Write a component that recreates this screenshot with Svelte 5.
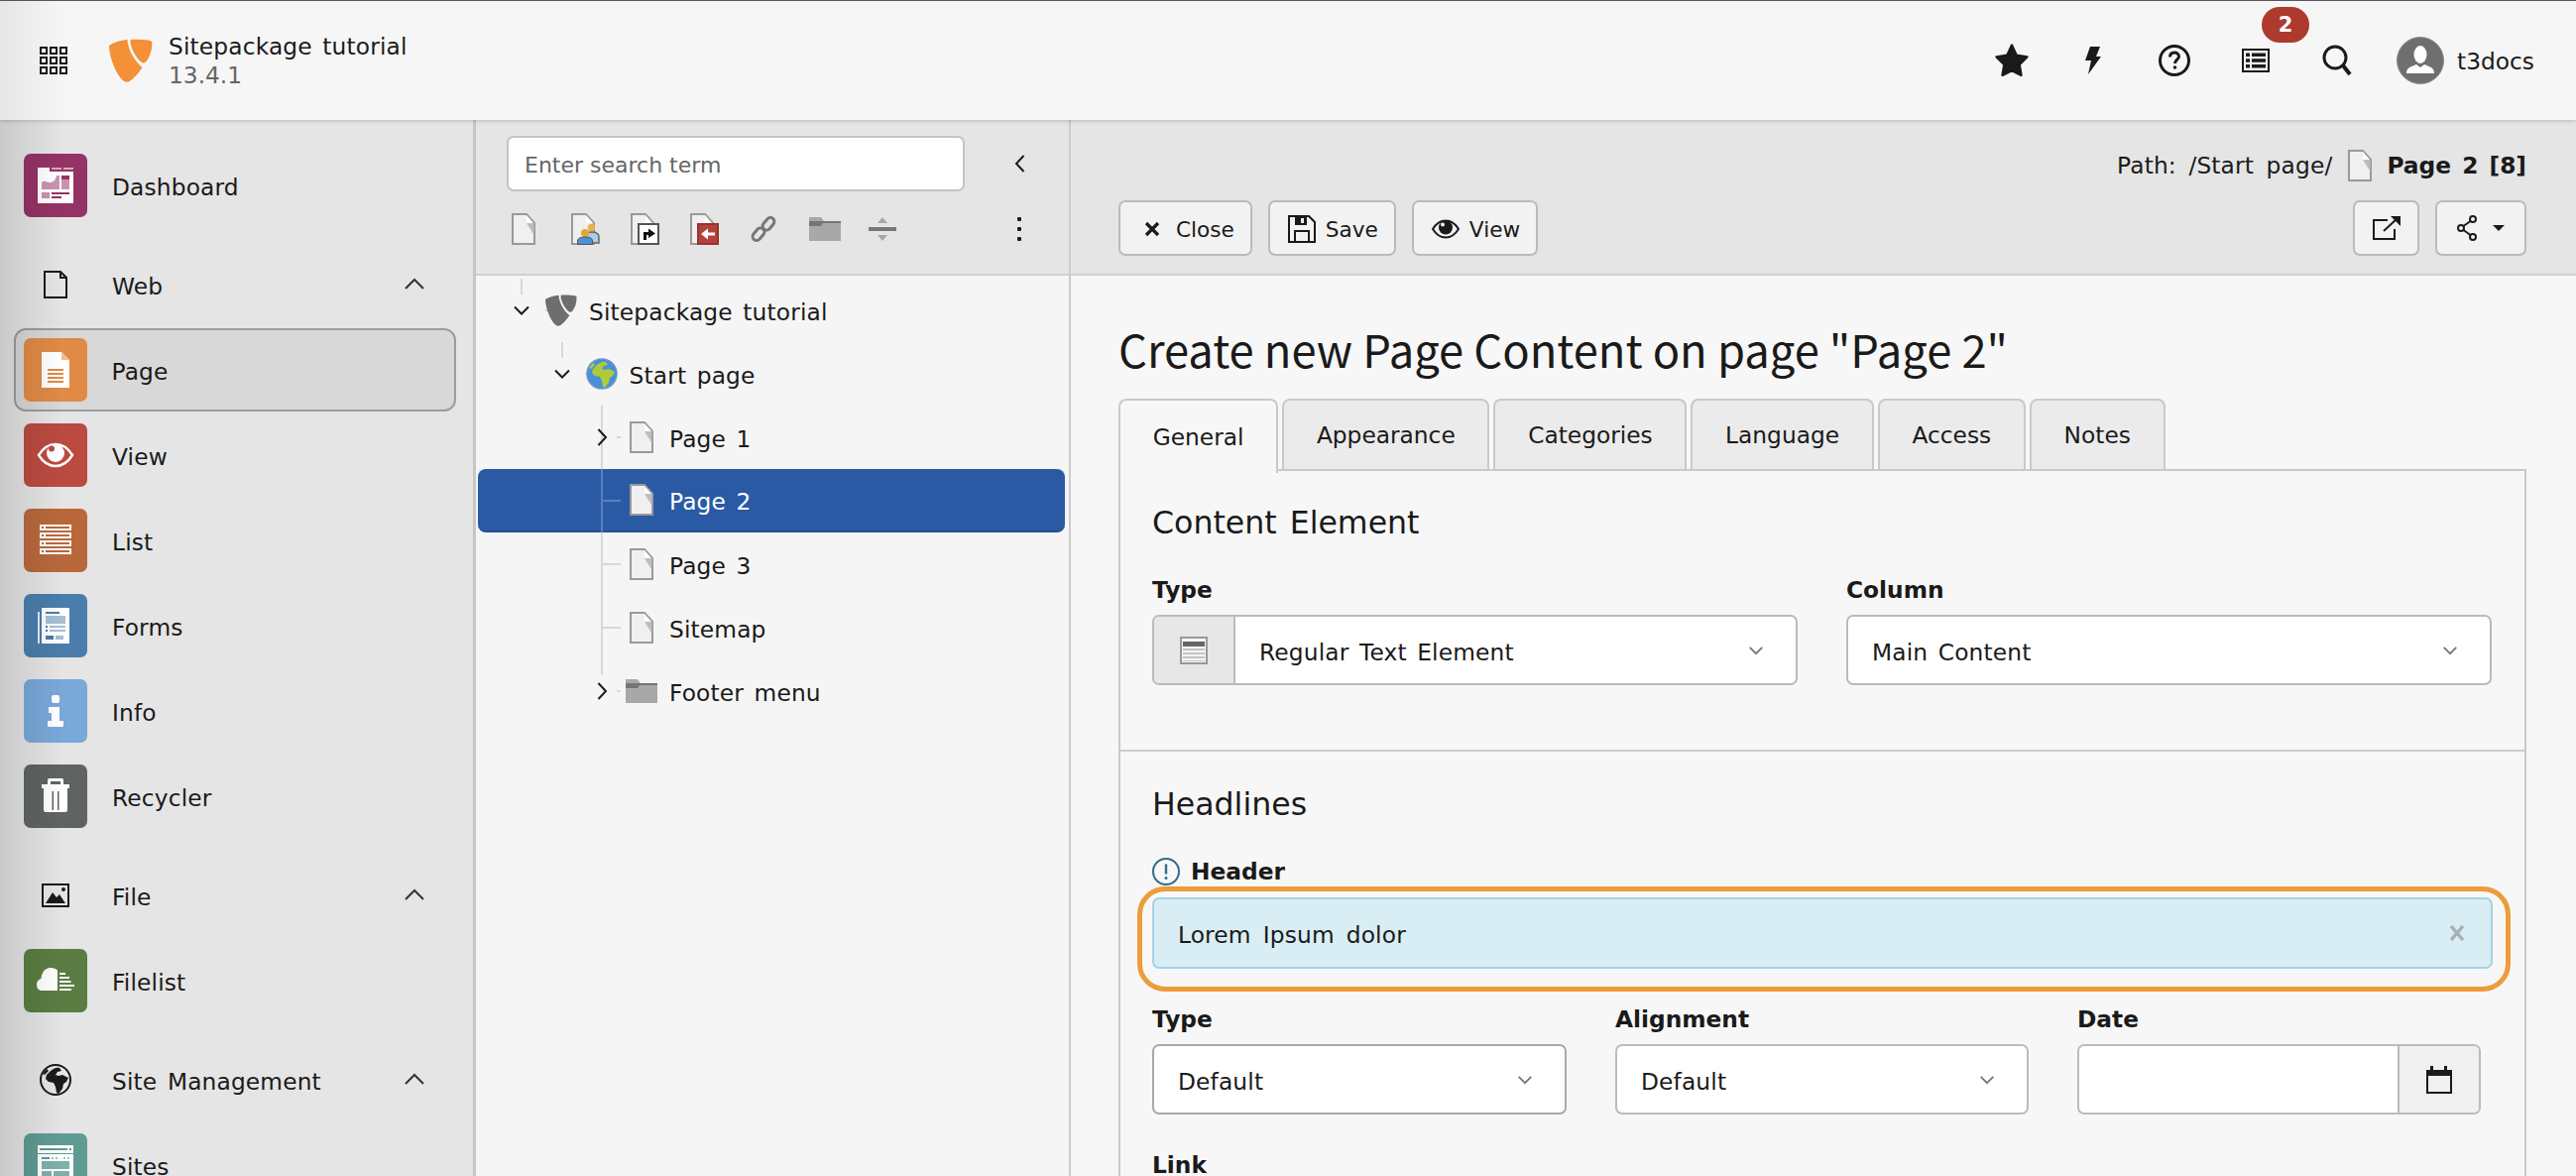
<script>
  const treeRows = [
    { label: 'Sitepackage tutorial', depth: 0, chev: 'down', icon: 'logo' },
    { label: 'Start page', depth: 1, chev: 'down', icon: 'globe' },
    { label: 'Page 1', depth: 2, chev: 'right', icon: 'doc' },
    { label: 'Page 2', depth: 2, icon: 'doc', selected: true },
    { label: 'Page 3', depth: 2, icon: 'doc' },
    { label: 'Sitemap', depth: 2, icon: 'doc' },
    { label: 'Footer menu', depth: 2, chev: 'right', icon: 'folder' }
  ];
  const tabs = ['General', 'Appearance', 'Categories', 'Language', 'Access', 'Notes'];
</script>

{#snippet logo(w, h, fill)}
  <svg width={w} height={h} viewBox="0 0 44 44">
    <path {fill} d="M0 7C4 4 12 1.5 18.5 1C19 12 27 24 33.5 29C28 37 22 43.7 18 43.7C10 43.7 0 20 0 7Z" />
    <path {fill} d="M21.5 1C27 .5 42 1 43 3C43.5 5 43.5 8 42 14C40 20 37.5 24 35 24.5C30 24.5 21.5 10 21.5 3Z" />
  </svg>
{/snippet}

{#snippet doc()}
  <svg width="24" height="32" viewBox="0 0 24 32">
    <path d="M1 1H15L23 10V31H1Z" fill="#f0f0f0" stroke="#999" stroke-width="2" />
    <path d="M15 2V10H22Z" fill="#fff" />
    <path d="M15 10H22.5V22Z" fill="#bdbdbd" />
  </svg>
{/snippet}

{#snippet folder(w, h)}
  <svg width={w} height={h} viewBox="0 0 32 24">
    <path d="M0 0H12L15 4H32V24H0Z" fill="#a8a8a8" />
    <path d="M0 4H32V6H14L12 9H0Z" fill="#757575" />
  </svg>
{/snippet}

{#snippet chev(dir, color = '#1a1a1a', size = 20)}
  <svg class="chev" width={size} height={size} viewBox="0 0 20 20" fill="none" stroke={color} stroke-width="2">
    {#if dir === 'down'}<path d="M3 6.5L10 13.5L17 6.5" />{/if}
    {#if dir === 'up'}<path d="M1 14L10 5L19 14" />{/if}
    {#if dir === 'right'}<path d="M6.5 2L14 10L6.5 18" />{/if}
    {#if dir === 'left'}<path d="M13.5 2L6 10L13.5 18" />{/if}
  </svg>
{/snippet}

{#snippet icoDash()}
  <svg width="64" height="64" viewBox="0 0 64 64">
    <path d="M14 14H26V18H50V50H14Z" fill="#fff" />
    <path d="M28 14H38V16H28ZM40 14H50V16H40Z" fill="#d8a8c0" />
    <rect x="18" y="22" width="18" height="14" fill="#fff" />
    <path d="M18 29C22 26 24 30 27 29C30 28 32 27 33 22H36V36H18Z" fill="#c993b0" />
    <rect x="38" y="22" width="8" height="4" fill="#953364" />
    <rect x="38" y="26" width="8" height="10" fill="#c993b0" />
    <rect x="18" y="39" width="8" height="6" fill="#c993b0" />
    <rect x="28" y="39" width="18" height="2" fill="#953364" />
    <rect x="28" y="43" width="10" height="2" fill="#953364" />
  </svg>
{/snippet}

{#snippet icoPage()}
  <svg width="64" height="64" viewBox="0 0 64 64">
    <path d="M18 14H38L46 22V50H18Z" fill="#fff" />
    <path d="M38 14L46 22H38Z" fill="#eebb92" />
    <path d="M24 31H40V33H24ZM24 35H40V37H24ZM24 39H40V41H24ZM24 43H40V45H24Z" fill="#e08a46" />
  </svg>
{/snippet}

{#snippet icoEye()}
  <svg width="64" height="64" viewBox="0 0 64 64">
    <path d="M15 32C20 24 26 21 32 21C38 21 44 24 49 32C44 40 38 43 32 43C26 43 20 40 15 32Z" fill="none" stroke="#fff" stroke-width="2.4" />
    <circle cx="32" cy="30" r="9" fill="#fff" />
    <circle cx="28" cy="25.5" r="3" fill="#bb4a40" />
  </svg>
{/snippet}

{#snippet icoList()}
  <svg width="64" height="64" viewBox="0 0 64 64">
    {#each [16, 24, 32, 40] as y}
      <rect x="16" {y} width="32" height="6" fill="#fff" />
      <rect x="22" y={y + 2} width="24" height="2" fill="#b9683c" />
      <rect x="18" y={y + 2} width="2" height="2" fill="#b9683c" />
    {/each}
  </svg>
{/snippet}

{#snippet icoForms()}
  <svg width="64" height="64" viewBox="0 0 64 64">
    <rect x="14" y="18" width="2" height="32" fill="#dfe8f1" />
    <rect x="18" y="14" width="28" height="36" fill="#fff" />
    <rect x="22" y="18" width="14" height="2" fill="#4a7dab" />
    <rect x="22" y="22" width="20" height="8" fill="#a3bfd6" />
    <rect x="22" y="32" width="2" height="2" fill="#4a7dab" />
    <rect x="26" y="32" width="16" height="2" fill="#a3bfd6" />
    <rect x="22" y="36" width="2" height="2" fill="#4a7dab" />
    <rect x="26" y="36" width="16" height="2" fill="#a3bfd6" />
    <rect x="22" y="42" width="8" height="4" fill="#4a7dab" />
    <rect x="32" y="42" width="8" height="4" fill="#a3bfd6" />
  </svg>
{/snippet}

{#snippet icoInfo()}
  <svg width="64" height="64" viewBox="0 0 64 64">
    <rect x="28" y="16" width="8" height="8" rx="2" fill="#fff" />
    <path d="M25 28H36V42H40V47a1 1 0 0 1-1 1H25a1 1 0 0 1-1-1V42H28V34H25Z" fill="#fff" />
  </svg>
{/snippet}

{#snippet icoTrash()}
  <svg width="64" height="64" viewBox="0 0 64 64">
    <path d="M24 20V15.5a1.5 1.5 0 0 1 1.500-1.500H38.500a1.500 1.500 0 0 1 1.500 1.500V20H46V24H18V20ZM27 20H37V17H27Z" fill="#fff" />
    <path d="M20 24H44V46a2 2 0 0 1-2 2H22a2 2 0 0 1-2-2Z" fill="#fff" />
    <path d="M28.500 27H30V46H28.500ZM34 27H35.500V46H34Z" fill="#5f6362" />
  </svg>
{/snippet}

{#snippet icoCloud()}
  <svg width="64" height="64" viewBox="0 0 64 64">
    <path d="M34 42H18C15 42 13 39.500 13 36C13 33 15 30.500 17.500 30C18 24 21 19 27 19C30 19 32.500 20 34 21.500Z" fill="#fff" />
    <path d="M36 24H42V26H36ZM36 28H46V30H36ZM36 32H47.500V34H36ZM36 36H51V38H36ZM36 40H48V42H36Z" fill="#fff" />
  </svg>
{/snippet}

{#snippet icoSites()}
  <svg width="64" height="64" viewBox="0 0 64 64">
    <rect x="14" y="12" width="36" height="48" fill="#fff" />
    <rect x="16" y="15" width="28" height="2" fill="#5f9b93" />
    <rect x="46" y="15" width="2" height="2" fill="#5f9b93" />
    <rect x="14" y="20" width="36" height="1" fill="#5f9b93" />
    <rect x="18" y="24" width="8" height="2" fill="#5f9b93" />
    <rect x="28" y="24" width="2" height="2" fill="#9fc4bf" />
    <rect x="32" y="24" width="2" height="2" fill="#9fc4bf" />
    <rect x="40" y="24" width="2" height="2" fill="#9fc4bf" />
    <rect x="44" y="24" width="2" height="2" fill="#9fc4bf" />
    <rect x="18" y="28" width="28" height="8" fill="#7fb0aa" />
    <rect x="18" y="38" width="10" height="8" fill="#7fb0aa" />
    <rect x="30" y="38" width="16" height="8" fill="#7fb0aa" />
  </svg>
{/snippet}

{#snippet icoWeb()}
  <svg width="24" height="28" viewBox="0 0 24 28">
    <path d="M1 1H17L23 7V27H1Z" fill="none" stroke="#1a1a1a" stroke-width="2" />
    <path d="M17 1V7H23" fill="none" stroke="#1a1a1a" stroke-width="2" />
  </svg>
{/snippet}

{#snippet icoFile()}
  <svg width="28" height="24" viewBox="0 0 28 24">
    <rect x="1" y="1" width="26" height="22" fill="none" stroke="#1a1a1a" stroke-width="2" />
    <path d="M4 20L11 9L15 14L18 11L24 20Z" fill="#1a1a1a" />
    <circle cx="22" cy="6" r="2" fill="#1a1a1a" />
  </svg>
{/snippet}

{#snippet earth(sea, land, size)}
  <svg width={size} height={size} viewBox="0 0 32 32">
    <circle cx="16" cy="16" r="15" fill={sea} stroke={sea === 'none' ? land : '#6d96c9'} stroke-width={sea === 'none' ? 2 : 1.500} />
    <path d="M10 8C13 5 17 3 20 4L22 7L18 8L16 11L19 12L23 11L29 14L27 18L24 20L23 25L19 30L17 29L16 23L14 19L9 18L6 15L7 11ZM3 10L7 5L9 7L5 11Z" fill={land} />
  </svg>
{/snippet}

{#snippet icoGlobeDark()}
  {@render earth('none', '#1a1a1a', 32)}
{/snippet}

{#snippet mod(label, color, icon)}
  <div class="mod">
    <span class="tile" style:background={color}>{@render icon()}</span>
    <span class="mod-label">{label}</span>
  </div>
{/snippet}

{#snippet group(label, icon)}
  <div class="group">
    <span class="group-ico">{@render icon()}</span>
    <span class="mod-label">{label}</span>
    <span class="group-chev">{@render chev('up', '#333')}</span>
  </div>
{/snippet}

{#snippet selectBox(text, strong = false)}
  <div class="select" class:strong>
    <span class="select-text">{text}</span>
    {@render chev('down', '#777', 18)}
  </div>
{/snippet}

<div class="page">
  <header class="top">
    <button class="grid-btn" aria-label="Modules">
      <svg width="28" height="28" viewBox="0 0 28 28" fill="none" stroke="#1a1a1a" stroke-width="2">
        {#each [1, 11, 21] as y}
          {#each [1, 11, 21] as x}
            <rect {x} {y} width="6" height="6" />
          {/each}
        {/each}
      </svg>
    </button>
    <div class="brand-logo">{@render logo(44, 44, '#f49035')}</div>
    <div class="brand">
      <div>Sitepackage tutorial</div>
      <div class="version">13.4.1</div>
    </div>
    <nav class="tools">
      <span class="tool">
        <svg width="38" height="38" viewBox="0 0 32 32"><path d="M16 3L20 11.500L29 13L22.500 19.500L24 28.500L16 24.500L8 28.500L9.500 19.500L3 13L12 11.500Z" fill="#1a1a1a" stroke="#1a1a1a" stroke-width="2" stroke-linejoin="round" /></svg>
      </span>
      <span class="tool">
        <svg width="20" height="30" viewBox="0 0 20 30"><path d="M7 1H17L13 11H18L5 29L8 15H2Z" fill="#1a1a1a" /></svg>
      </span>
      <span class="tool">
        <svg width="32" height="32" viewBox="0 0 32 32" fill="none" stroke="#1a1a1a"><circle cx="16" cy="16" r="14.500" stroke-width="3" /><path d="M11.500 12.500C11.500 9.500 13.500 8 16 8C18.500 8 20.500 9.500 20.500 12C20.500 15 16.500 15.500 16.500 19" stroke-width="3" /><circle cx="16.500" cy="23" r="1.800" fill="#1a1a1a" stroke="none" /></svg>
      </span>
      <span class="tool">
        <svg width="28" height="24" viewBox="0 0 28 24"><rect x="1" y="1" width="26" height="22" fill="none" stroke="#1a1a1a" stroke-width="2" /><path d="M4 4.500H8V8H4ZM10 4.500H24V8H10ZM4 10.300H8V13.800H4ZM10 10.300H24V13.800H10ZM4 16H8V19.500H4ZM10 16H24V19.500H10Z" fill="#1a1a1a" /></svg>
        <span class="badge">2</span>
      </span>
      <span class="tool">
        <svg width="30" height="32" viewBox="0 0 30 32" fill="none" stroke="#1a1a1a"><circle cx="13" cy="13" r="11" stroke-width="3" /><path d="M21 21L28 30" stroke-width="4" /></svg>
      </span>
      <span class="user">
        <svg width="48" height="48" viewBox="0 0 48 48">
          <circle cx="24" cy="24" r="23.500" fill="#6f6f6f" stroke="#8c8c8c" />
          <ellipse cx="24" cy="18" rx="6.500" ry="9" fill="#fff" />
          <path d="M10 37C10 31 15 30 20 28L24 31L28 28C33 30 38 31 38 37Z" fill="#fff" />
        </svg>
        <span>t3docs</span>
      </span>
    </nav>
  </header>

  <div class="main">
    <aside class="side">
      {@render mod('Dashboard', '#953364', icoDash)}
      {@render group('Web', icoWeb)}
      <div class="active">{@render mod('Page', '#e08a46', icoPage)}</div>
      {@render mod('View', '#bb4a40', icoEye)}
      {@render mod('List', '#b9683c', icoList)}
      {@render mod('Forms', '#4a7dab', icoForms)}
      {@render mod('Info', '#79a8d9', icoInfo)}
      {@render mod('Recycler', '#5f6362', icoTrash)}
      {@render group('File', icoFile)}
      {@render mod('Filelist', '#5b7d43', icoCloud)}
      {@render group('Site Management', icoGlobeDark)}
      {@render mod('Sites', '#5f9b93', icoSites)}
    </aside>

    <section class="treepanel">
      <div class="treetools">
        <div class="searchrow">
          <div class="search">Enter search term</div>
          <span class="collapse">{@render chev('left', '#1a1a1a', 20)}</span>
        </div>
        <div class="iconrow">
          <span class="ti">{@render doc()}</span>
          <span class="ti">
            <svg width="30" height="32" viewBox="0 0 30 32">
              <path d="M1 1H15L23 10V31H1Z" fill="#f0f0f0" stroke="#999" stroke-width="2" />
              <path d="M15 2V10H22Z" fill="#fff" />
              <circle cx="20.500" cy="14.500" r="3.800" fill="#e9b04c" />
              <path d="M15 30V24C15 20 18 19 20.500 19C24 19 28 20 28 24V30Z" fill="#a9cbe6" stroke="#666" stroke-width="1.500" />
              <circle cx="14" cy="20" r="4" fill="#eaa62f" />
              <path d="M6.500 31.500V28C6.500 25 10 24 14 24C18 24 21.500 25 21.500 28V31.500Z" fill="#4d8fdc" stroke="#555" />
            </svg>
          </span>
          <span class="ti">
            <svg width="30" height="32" viewBox="0 0 30 32">
              <path d="M1 1H15L23 10V31H1Z" fill="#f0f0f0" stroke="#999" stroke-width="2" />
              <path d="M15 2V10H22Z" fill="#fff" />
              <rect x="8" y="11" width="20" height="20" fill="#fff" stroke="#555" stroke-width="2" />
              <path d="M13 27V19H18V15.500L25 20.500L18 25V22H16V27Z" fill="#111" />
            </svg>
          </span>
          <span class="ti">
            <svg width="30" height="32" viewBox="0 0 30 32">
              <path d="M1 1H15L23 10V31H1Z" fill="#f0f0f0" stroke="#999" stroke-width="2" />
              <path d="M15 2V10H22Z" fill="#fff" />
              <rect x="8" y="11" width="20" height="20" fill="#b2423c" stroke="#97342f" stroke-width="2" />
              <path d="M11 21L18 15.500V19.500H25V22.500H18V26.500Z" fill="#fff" />
            </svg>
          </span>
          <span class="ti">
            <svg width="28" height="28" viewBox="0 0 28 28" fill="none" stroke="#777" stroke-width="3">
              <rect x="15" y="1.800" width="8" height="14" rx="4" transform="rotate(40 19 8.800)" />
              <rect x="5" y="12.200" width="8" height="14" rx="4" transform="rotate(40 9 19.200)" />
            </svg>
          </span>
          <span class="ti">{@render folder(32, 24)}</span>
          <span class="ti">
            <svg width="28" height="24" viewBox="0 0 28 24">
              <path d="M14 0L19 6H9ZM9 18H19L14 24Z" fill="#a8a8a8" />
              <rect y="10" width="28" height="4" fill="#777" />
            </svg>
          </span>
          <span class="dots" aria-hidden="true"><i></i><i></i><i></i></span>
        </div>
      </div>
      <div class="tree">
        <svg class="lines" width="160" height="420" viewBox="0 0 160 420">
          <path d="M46 3V19M87 67V83M127 131V195M127 259V403M127 291H146M127 355H146M142 163H146M142 419H146M77 35H70M118 99H110" stroke="#d8d8d8" stroke-width="2" fill="none" />
          <path d="M127 195V259M127 227H146" stroke="#5a7fb8" stroke-width="2" fill="none" />
        </svg>
        {#each treeRows as r}
          <div class="row" class:selected={r.selected} style:padding-left="{34 + r.depth * 40.500}px">
            <span class="tchev">{#if r.chev}{@render chev(r.chev, '#1a1a1a', 20)}{/if}</span>
            <span class="ticon">
              {#if r.icon === 'logo'}{@render logo(32, 32, '#6e6e6e')}{/if}
              {#if r.icon === 'globe'}{@render earth('#4a90d9', '#aecb3a', 32)}{/if}
              {#if r.icon === 'doc'}{@render doc()}{/if}
              {#if r.icon === 'folder'}{@render folder(32, 24)}{/if}
            </span>
            <span class="tlabel">{r.label}</span>
          </div>
        {/each}
      </div>
    </section>

    <main class="content">
      <div class="docbar">
        <div class="path">
          <span class="path-text">Path: /Start page/</span>
          <span class="path-ico">{@render doc()}</span>
          <strong>Page 2 [8]</strong>
        </div>
        <div class="btnrow">
          <button class="btn">
            <span class="bi">
              <svg width="16" height="16" viewBox="0 0 16 16"><path d="M2 2L14 14M14 2L2 14" stroke="#1a1a1a" stroke-width="3.200" /></svg>
            </span>Close
          </button>
          <button class="btn">
            <span class="bi">
              <svg width="28" height="28" viewBox="0 0 28 28"><path d="M1 1H21L27 7V27H1Z" fill="none" stroke="#1a1a1a" stroke-width="2" /><path d="M7 1H19V10H7Z" fill="#1a1a1a" /><rect x="13" y="3" width="3" height="5" fill="#f2f2f2" /><path d="M7 27V16H21V27" fill="none" stroke="#1a1a1a" stroke-width="2" /></svg>
            </span>Save
          </button>
          <button class="btn">
            <span class="bi">
              <svg width="28" height="20" viewBox="0 0 28 20"><path d="M1 10C5 3.500 9.500 1.500 14 1.500C18.500 1.500 23 3.500 27 10C23 16.500 18.500 18.500 14 18.500C9.500 18.500 5 16.500 1 10Z" fill="none" stroke="#1a1a1a" stroke-width="2" /><circle cx="14" cy="8.500" r="7" fill="#1a1a1a" /><circle cx="11" cy="5.500" r="2" fill="#f2f2f2" /></svg>
            </span>View
          </button>
          <span class="spacer"></span>
          <button class="btn icon-btn" aria-label="Open in new window">
            <svg width="28" height="24" viewBox="0 0 28 24" fill="none" stroke="#1a1a1a" stroke-width="2"><path d="M15 4H1V23H22V13" /><path d="M11 15L25 2" /><path d="M18 0H28V10Z" fill="#1a1a1a" stroke="none" /></svg>
          </button>
          <button class="btn share-btn" aria-label="Share">
            <svg width="20" height="26" viewBox="0 0 20 26" fill="none" stroke="#1a1a1a" stroke-width="2"><circle cx="16" cy="4" r="3" /><circle cx="4" cy="13" r="3" /><circle cx="16" cy="22" r="3" /><path d="M6.500 11L13.500 6M6.500 15L13.500 20" /></svg>
            <svg width="12" height="6" viewBox="0 0 12 6"><path d="M0 0H12L6 6Z" fill="#1a1a1a" /></svg>
          </button>
        </div>
      </div>

      <div class="body">
        <h1>Create new Page Content on page "Page 2"</h1>
        <div class="tabs">
          {#each tabs as t, i}
            <div class="tab" class:on={i === 0}>{t}</div>
          {/each}
        </div>
        <div class="panel">
          <div class="fieldset first">
            <h2>Content Element</h2>
            <div class="cols two">
              <div>
                <div class="label">Type</div>
                <div class="select addon-select">
                  <span class="addon">
                    <svg width="28" height="28" viewBox="0 0 28 28">
                      <rect x="1" y="1" width="26" height="26" fill="#f5f5f5" stroke="#999" stroke-width="2" />
                      <rect x="3" y="5" width="22" height="5" fill="#666" />
                      <path d="M3 12H25V14H3ZM3 16H25V18H3ZM3 20H25V22H3ZM3 24H25V25H3Z" fill="#c4c4c4" />
                    </svg>
                  </span>
                  <span class="select-text">Regular Text Element</span>
                  {@render chev('down', '#777', 18)}
                </div>
              </div>
              <div>
                <div class="label">Column</div>
                {@render selectBox('Main Content')}
              </div>
            </div>
          </div>
          <div class="fieldset">
            <h2>Headlines</h2>
            <div class="label header-label">
              <svg width="28" height="28" viewBox="0 0 28 28" fill="none" stroke="#2f6d8c" stroke-width="2"><circle cx="14" cy="14" r="13" /><path d="M14 6.500V16.500" stroke-width="2.400" /><circle cx="14" cy="20.500" r="1.500" fill="#2f6d8c" stroke="none" /></svg>
              Header
            </div>
            <div class="changed">
              <span class="changed-text">Lorem Ipsum dolor</span>
              <svg width="16" height="16" viewBox="0 0 16 16"><path d="M2 1L14 15M14 1L2 15" stroke="#a8b0b4" stroke-width="3.400" /></svg>
              <div class="highlight"></div>
            </div>
            <div class="cols three">
              <div>
                <div class="label">Type</div>
                {@render selectBox('Default', true)}
              </div>
              <div>
                <div class="label">Alignment</div>
                {@render selectBox('Default')}
              </div>
              <div>
                <div class="label">Date</div>
                <div class="select date">
                  <span class="date-input"></span>
                  <span class="date-btn">
                    <svg width="26" height="28" viewBox="0 0 26 28"><rect x="1" y="5" width="24" height="22" fill="none" stroke="#1a1a1a" stroke-width="2" /><path d="M0 4H4V0H7V4H18V0H21V4H26V10H0Z" fill="#1a1a1a" /></svg>
                  </span>
                </div>
              </div>
            </div>
            <div class="label link-label">Link</div>
          </div>
        </div>
      </div>
    </main>
  </div>
  <div class="edge"></div>
</div>

<style>
  :global(body) {
    margin: 0;
    background: #f7f7f7;
  }
  .page {
    position: relative;
    width: 2598px;
    height: 1186px;
    overflow: hidden;
    font-family: "DejaVu Sans", sans-serif;
    font-size: 23.3px;
    word-spacing: 3px;
    color: #1a1a1a;
    display: flex;
    flex-direction: column;
  }
  .edge {
    position: absolute;
    left: 0;
    top: 121px;
    bottom: 0;
    width: 64px;
    background: linear-gradient(to right, rgba(0, 0, 0, 0.12), rgba(0, 0, 0, 0));
    pointer-events: none;
    z-index: 5;
  }
  .top {
    position: relative;
    z-index: 3;
    box-sizing: border-box;
    height: 121px;
    flex: none;
    display: flex;
    align-items: center;
    background: linear-gradient(to right, #e6e6e6, #f6f6f6 64px);
    border-top: 1px solid #55555f;
    box-shadow: 0 1px 4px rgba(0, 0, 0, 0.2);
  }
  .grid-btn {
    all: unset;
    display: flex;
    margin-left: 40px;
  }
  .brand-logo {
    display: flex;
    margin-left: 42px;
  }
  .brand {
    margin-left: 16px;
    line-height: 29px;
    letter-spacing: 0.15px;
  }
  .version {
    color: #666;
    letter-spacing: 0;
  }
  .tools {
    margin-left: auto;
    display: flex;
    align-items: center;
    padding-right: 42px;
  }
  .tool {
    position: relative;
    width: 82px;
    height: 60px;
    display: flex;
    align-items: center;
    justify-content: center;
  }
  .badge {
    position: absolute;
    left: 47px;
    top: -24px;
    width: 48px;
    height: 36px;
    border-radius: 18px;
    background: #ae3a2d;
    color: #fff;
    font-weight: 700;
    font-size: 21px;
    line-height: 36px;
    text-align: center;
  }
  .user {
    display: flex;
    align-items: center;
    gap: 13px;
    padding-left: 19px;
  }
  .main {
    flex: 1;
    display: flex;
    min-height: 0;
  }
  .side {
    box-sizing: border-box;
    width: 480px;
    flex: none;
    background: #e5e5e5;
    border-right: 3px solid #c6c6c6;
    padding: 24px 0 0 14px;
  }
  .mod {
    box-sizing: border-box;
    width: 446px;
    height: 84px;
    margin-bottom: 2px;
    display: flex;
    align-items: center;
    padding-left: 10px;
  }
  .tile {
    width: 64px;
    height: 64px;
    border-radius: 7px;
    display: flex;
    flex: none;
  }
  .mod-label {
    margin-left: 25px;
    padding-top: 3px;
    letter-spacing: 0.15px;
  }
  .active .mod {
    background: #d8d8d8;
    border: 2.500px solid #9c9c9c;
    border-radius: 12px;
    padding-left: 7.500px;
  }
  .group {
    box-sizing: border-box;
    width: 446px;
    height: 84px;
    margin-top: 16px;
    margin-bottom: 2px;
    display: flex;
    align-items: center;
    padding-left: 10px;
  }
  .group-ico {
    width: 64px;
    display: flex;
    justify-content: center;
    flex: none;
  }
  .group-chev {
    margin-left: auto;
    margin-right: 32px;
    display: flex;
  }
  .treepanel {
    box-sizing: border-box;
    width: 600px;
    flex: none;
    background: #f5f5f5;
    border-right: 2px solid #ccc;
  }
  .treetools {
    box-sizing: border-box;
    height: 157px;
    background: #e5e5e5;
    border-bottom: 2px solid #d0d0d0;
    padding: 16px 0 0 31px;
  }
  .searchrow {
    display: flex;
    align-items: center;
  }
  .search {
    box-sizing: border-box;
    width: 462px;
    height: 56px;
    border: 2px solid #c4c4c4;
    border-radius: 7px;
    background: #fff;
    color: #666;
    font-size: 22px;
    word-spacing: 0;
    padding: 3px 0 0 16px;
    display: flex;
    align-items: center;
  }
  .collapse {
    display: flex;
    margin-left: 46px;
  }
  .iconrow {
    position: relative;
    display: flex;
    align-items: center;
    height: 32px;
    margin-top: 22px;
    margin-left: 5px;
  }
  .ti {
    display: flex;
    width: 60px;
    flex: none;
  }
  .dots {
    position: absolute;
    left: 510px;
    top: 4px;
    display: flex;
    flex-direction: column;
    gap: 6px;
  }
  .dots i {
    display: block;
    width: 4px;
    height: 4px;
    background: #1a1a1a;
    border-radius: 1px;
  }
  .tree {
    position: relative;
    padding-top: 3px;
  }
  .lines {
    position: absolute;
    left: 0;
    top: 0;
    z-index: 1;
  }
  .row {
    position: relative;
    box-sizing: border-box;
    height: 64px;
    width: 592px;
    margin-left: 2px;
    display: flex;
    align-items: center;
  }
  .row > span {
    position: relative;
    z-index: 2;
  }
  .tlabel {
    padding-top: 3px;
    letter-spacing: 0.15px;
  }
  .row.selected {
    background: #2b5aa5;
    border: 2px solid #274f93;
    border-width: 0 0 2px;
    border-radius: 8px;
    color: #fff;
  }
  .tchev {
    width: 20px;
    height: 20px;
    display: flex;
    flex: none;
  }
  .ticon {
    width: 32px;
    margin-left: 14px;
    margin-right: 12px;
    display: flex;
    justify-content: center;
    flex: none;
  }
  .content {
    flex: 1;
    min-width: 0;
    background: #f7f7f7;
  }
  .docbar {
    box-sizing: border-box;
    height: 157px;
    background: #e5e5e5;
    border-bottom: 2px solid #d0d0d0;
    padding: 0 50px 0 48px;
  }
  .path {
    height: 81px;
    display: flex;
    align-items: center;
    justify-content: flex-end;
    padding-top: 10px;
    box-sizing: border-box;
  }
  .path-text {
    word-spacing: 5px;
    letter-spacing: 0.15px;
  }
  .path-ico {
    display: flex;
    margin: 0 15px 0 16px;
  }
  .btnrow {
    display: flex;
    gap: 16px;
  }
  .spacer {
    flex: 1;
  }
  .btn {
    box-sizing: border-box;
    height: 56px;
    display: flex;
    align-items: center;
    gap: 10px;
    padding: 2px 16px 0 18px;
    background: #f2f2f2;
    border: 2px solid #bbb;
    border-radius: 7px;
    font: inherit;
    font-size: 21.6px;
    color: inherit;
  }
  .bi {
    width: 28px;
    display: flex;
    justify-content: center;
  }
  .icon-btn {
    width: 67px;
    padding: 0;
    justify-content: center;
  }
  .share-btn {
    width: 92px;
    padding: 0;
    justify-content: center;
    gap: 16px;
  }
  .body {
    padding: 0 50px 0 48px;
  }
  h1 {
    margin: 0;
    padding-top: 40px;
    height: 85px;
    box-sizing: content-box;
    font-family: "Noto Sans CJK SC", "Noto Sans", sans-serif;
    font-weight: 400;
    font-size: 45.3px;
    word-spacing: 0;
    line-height: 66px;
  }
  .tabs {
    display: flex;
    gap: 4px;
    height: 71px;
    margin-top: -1px;
  }
  .tab {
    box-sizing: border-box;
    height: 71px;
    padding: 0 32.700px;
    display: flex;
    align-items: center;
    background: #ebebeb;
    border: 2px solid #c9c9c9;
    border-bottom: 0;
    border-radius: 8px 8px 0 0;
  }
  .tab.on {
    position: relative;
    z-index: 1;
    height: 75px;
    background: #f7f7f7;
  }
  .panel {
    box-sizing: border-box;
    border: 2px solid #c9c9c9;
    height: 800px;
    margin-left: 0;
  }
  .fieldset {
    padding: 33px 32px 0 32px;
    border-top: 2px solid #ccc;
  }
  .fieldset.first {
    border-top: 0;
    padding-top: 32px;
    padding-bottom: 65px;
  }
  h2 {
    margin: 0;
    font-weight: 400;
    font-size: 31.600px;
    word-spacing: 3px;
    line-height: 40px;
  }
  .label {
    font-weight: 700;
    line-height: 32px;
    margin-bottom: 9px;
  }
  .cols {
    display: grid;
    column-gap: 49px;
  }
  .first .cols {
    margin-top: 32px;
  }
  .two {
    grid-template-columns: 651px 651px;
  }
  .three {
    grid-template-columns: 418px 417px 407px;
    margin-top: 35px;
  }
  .select {
    box-sizing: border-box;
    height: 71px;
    background: #fff;
    border: 2px solid #bbb;
    border-radius: 7px;
    display: flex;
    align-items: center;
    padding-right: 31px;
    overflow: hidden;
  }
  .select.strong {
    border-color: #a8a8a8;
  }
  .select-text {
    flex: 1;
    padding: 3px 0 0 24px;
    letter-spacing: 0.15px;
  }
  .addon {
    width: 80px;
    align-self: stretch;
    background: #e7e7e7;
    border-right: 2px solid #bbb;
    display: flex;
    align-items: center;
    justify-content: center;
    flex: none;
  }
  .header-label {
    display: flex;
    align-items: center;
    gap: 11px;
    margin-top: 32px;
    margin-bottom: 10px;
  }
  .changed {
    position: relative;
    box-sizing: border-box;
    height: 72px;
    width: 1352px;
    background: #d9edf4;
    border: 2px solid #a3d3e8;
    border-radius: 7px;
    display: flex;
    align-items: center;
    justify-content: space-between;
    padding: 0 26px 0 24px;
  }
  .changed-text {
    padding-top: 3px;
    word-spacing: 4.500px;
    letter-spacing: 0.15px;
  }
  .highlight {
    position: absolute;
    box-sizing: border-box;
    left: -17px;
    right: -20px;
    top: -13px;
    bottom: -25px;
    border: 5px solid #ec9c3a;
    border-radius: 28px;
    pointer-events: none;
  }
  .date {
    padding: 0;
  }
  .date-input {
    flex: 1;
    align-self: stretch;
  }
  .date-btn {
    width: 80px;
    align-self: stretch;
    background: #f0f0f0;
    border-left: 2px solid #bbb;
    display: flex;
    align-items: center;
    justify-content: center;
  }
  .link-label {
    margin-top: 35px;
  }
</style>
